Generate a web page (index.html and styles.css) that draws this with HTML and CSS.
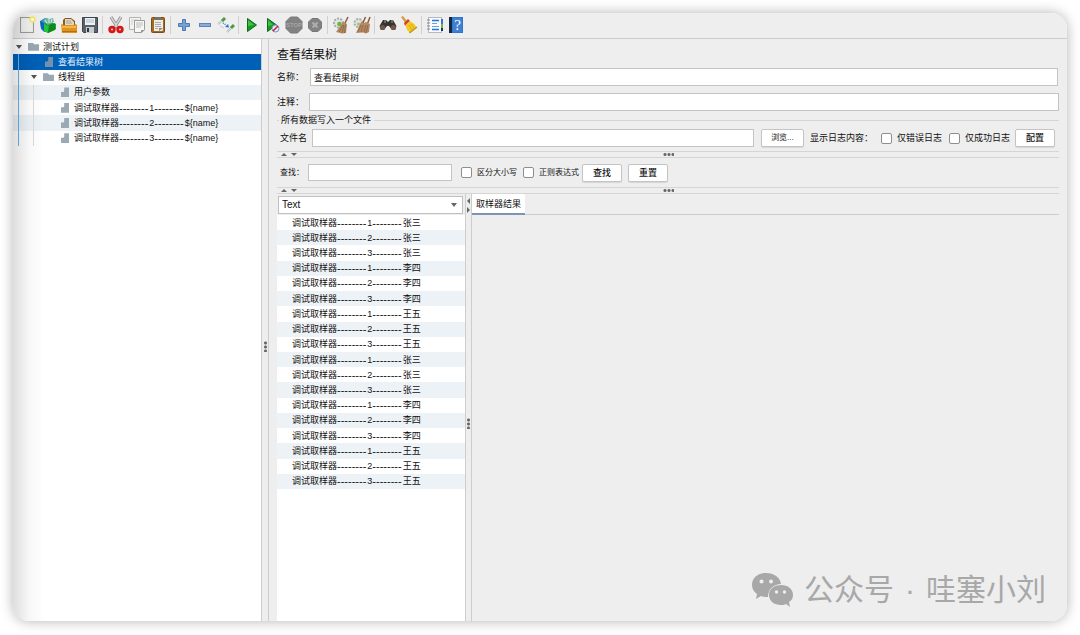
FILE: index.html
```html
<!DOCTYPE html>
<html lang="zh-CN">
<head>
	<meta charset="utf-8">
	<title>查看结果树</title>
	<meta name="viewport" content="initial-scale=1,width=device-width">
	<link rel="stylesheet" href="styles.css">
</head>
<body>

	<div class="window">
		<div class="toolbar">
			<button title="新建"><svg viewBox="0 0 18 18"><rect x="2.5" y="1.5" width="13" height="15" fill="#ececea" stroke="#9b9b97"/><path d="M4 3h10v12H4z" fill="#f1f1ef"/><circle cx="14.500" cy="3.500" r="3.200" fill="#f4e96a"/><circle cx="14.500" cy="3.500" r="1.600" fill="#fffde0"/></svg></button>
			<button title="模板"><svg viewBox="0 0 18 18"><path d="M1 5l5-3 4 1v12l-5 1-3-3z" fill="#2a8fb8"/><path d="M1 5l4 2v8l-3-3z" fill="#0d62c0"/><path d="M5 8l5-2 7 2-1 6-7 3-4-2z" fill="#15962b"/><path d="M5 8l5 2-1 7-4-2z" fill="#23c43d"/><path d="M10 10l6-3 1 6-8 4z" fill="#0c8a1d"/><path d="M4 5l3-3 3 1 4-1 1 4-6 3z" fill="#6fb6a4"/><path d="M6 4l2 3M10 3v4M13 3l-1 4" stroke="#d9efe9"/></svg></button>
			<button title="打开"><svg viewBox="0 0 18 18"><path d="M3 10V4l2-2h6l4 3v6z" fill="#8b5a14"/><path d="M5 3h6l3 3v5H5z" fill="#dcd9d0"/><path d="M6 5h5M6 7h6" stroke="#a9a494"/><path d="M1 8l3 1h9l3-1 1 1v8H2z" fill="#e0921f"/><path d="M2 10h14v2H2z" fill="#f4b54a"/><path d="M2 15h15v1H2z" fill="#b86d0b"/></svg></button>
			<button title="保存"><svg viewBox="0 0 18 18"><path d="M1.500 1.500h15v15h-14l-1-1z" fill="#59616b" stroke="#3d444c"/><rect x="4" y="2" width="10" height="7" fill="#eef2f5"/><path d="M5 4h8M5 6h8" stroke="#a9bccb"/><rect x="5" y="11" width="8" height="6" fill="#c9cdd1"/><rect x="6" y="12" width="2" height="4" fill="#30363d"/></svg></button>
			<span class="separator"></span>
			<button title="剪切"><svg viewBox="0 0 18 18"><path d="M4 1l7 11M14 1L7 12" stroke="#888" stroke-width="3.200"/><path d="M4 1l7 11M14 1L7 12" stroke="#d4d4d4" stroke-width="1.600"/><circle cx="5" cy="13.500" r="2.300" fill="none" stroke="#d81616" stroke-width="2.800"/><circle cx="13" cy="13.500" r="2.300" fill="none" stroke="#d81616" stroke-width="2.800"/></svg></button>
			<button title="复制"><svg viewBox="0 0 18 18"><path d="M1.500 1.500h11v12h-11z" fill="#f4f4f2" stroke="#b3b3af"/><path d="M3 4h7M3 6h2M3 8h2" stroke="#ccc"/><path d="M6.500 4.500h10v9l-3 3h-7z" fill="#f7f7f5" stroke="#9b9b97"/><path d="M8 7h7M8 9h7M8 11h5" stroke="#bbb"/><path d="M13 17v-3h4z" fill="#999"/></svg></button>
			<button title="粘贴"><svg viewBox="0 0 18 18"><rect x="2.500" y="1.500" width="13" height="15" rx="1" fill="#a66a1e" stroke="#784c16"/><path d="M5 4h9v10l-1 1H5z" fill="#ececea"/><path d="M6 1h6v3H6z" fill="#71716d"/><path d="M6 6.500h6M6 8.500h6M6 10.500h6M6 12.500h3" stroke="#aaa"/><path d="M10 15v-3h4z" fill="#888"/></svg></button>
			<span class="separator"></span>
			<button title="展开"><svg viewBox="0 0 18 18"><path d="M7.500 3.500h3v4h4v3h-4v4h-3v-4h-4v-3h4z" fill="#76a3d6" stroke="#4a7ab5"/></svg></button>
			<button title="折叠"><svg viewBox="0 0 18 18"><rect x="3.500" y="7.500" width="11" height="3" fill="#8aacd8" stroke="#5a84bd"/></svg></button>
			<button title="切换"><svg viewBox="0 0 18 18"><path d="M1 8l4-3M10 16l4-4" stroke="#a9b3ab" stroke-width="1.800"/><path d="M1 8l4-3M10 16l4-4" stroke="#fafafa" stroke-width=".7"/><path d="M5 5l3-3M14 12l3-3" stroke="#4a9b43" stroke-width="3"/><path d="M3 10l4 2" stroke="#ccc"/><path d="M6 7l3 2" stroke="#2671d8" stroke-width="1.300" stroke-dasharray="1 1"/><path d="M12 11.500l-4-.5 3-3z" fill="#2671d8"/></svg></button>
			<span class="separator"></span>
			<button title="启动"><svg viewBox="0 0 18 18"><path d="M4.500 2.500v13l9-6.500z" fill="#159a24" stroke="#0a6d14"/><path d="M5 4v6l6-1z" fill="#47bd4b"/></svg></button>
			<button title="不停顿开始"><svg viewBox="0 0 18 18"><path d="M3.500 2.500v13l9-6.500z" fill="#159a24" stroke="#0a6d14"/><path d="M4 4v6l5-1z" fill="#47bd4b"/><circle cx="11.500" cy="12.500" r="3.500" fill="#e6eef9" stroke="#6b94cd"/><path d="M9 15l5-5" stroke="#d5202a" stroke-width="1.600"/></svg></button>
			<button title="停止" disabled><svg viewBox="0 0 18 18"><path d="M5.500 1h7L17 5.500v7L12.500 17h-7L1 12.500v-7z" fill="#828282" stroke="#787878"/><text class="stop-text" x="9" y="11" text-anchor="middle">STOP</text></svg></button>
			<button title="关闭" disabled><svg viewBox="0 0 18 18"><path d="M6 2.500h6l3.500 3.500v6L12 15.500H6L2.500 12V6z" fill="#828282" stroke="#787878"/><path d="M6.500 6.500l5 5M11.500 6.500l-5 5" stroke="#adadad" stroke-width="2.200"/></svg></button>
			<span class="separator"></span>
			<button title="清除"><svg viewBox="0 0 18 18"><circle cx="6.500" cy="7" r="4.500" fill="#e2e4e1" stroke="#aaaca9" stroke-width="2" stroke-dasharray="2 1.200"/><circle cx="7.500" cy="8" r="2.300" fill="#63b83a"/><path d="M16 1l-4 8" stroke="#8c5c39" stroke-width="1.600"/><path d="M11 6l4 2-1 9-4 .5-6-1.500z" fill="#b58a63"/><path d="M11 9l-4 7M12 9l-2 8M13.500 9l-1 8" stroke="#8a6341" stroke-width=".8"/></svg></button>
			<button title="清除全部"><svg viewBox="0 0 18 18"><circle cx="5.500" cy="7" r="4" fill="#dfe2dd" stroke="#aaaca9" stroke-width="2" stroke-dasharray="2 1.200"/><circle cx="5.500" cy="8" r="1.500" fill="#9cc188"/><path d="M12.500 1L9 9M17 1l-3 8" stroke="#8c5c39" stroke-width="1.500"/><path d="M8 6l3 1 2-1 4 2-1 8-3 1.500-3-1-7 .5z" fill="#b58a63"/><path d="M8 9l-3 7M10 9l-2 7M13 9l-2 7M15 9l-2 8" stroke="#8a6341" stroke-width=".8"/></svg></button>
			<span class="separator"></span>
			<button title="搜索"><svg viewBox="0 0 18 18"><path d="M4 4h3l2 2 2-2h3l3.500 6-1.500 4h-3l-3-4H8l-3 4H2L.5 10z" fill="#37332f"/><path d="M5 4h2v3H5zM12 4h2v3h-2z" fill="#706a63"/><circle cx="3.500" cy="11.500" r="2.600" fill="#75564a"/><circle cx="14.500" cy="11.500" r="2.600" fill="#75564a"/></svg></button>
			<button title="重置搜索"><svg viewBox="0 0 18 18"><path d="M1 1l2-1 4 5-2 1.500z" fill="#d99a49"/><path d="M4 7l4-4 2 2-5 5z" fill="#d94222"/><path d="M5.500 9L10 5q4 2 6.500 6l-6.500 6-3-3z" fill="#f2c928"/><path d="M9 9l3 5M11 8l3 4" stroke="#d0a214" stroke-width=".8"/><path d="M9.500 17l7.500-6" stroke="#c4940f" stroke-width="1.500"/></svg></button>
			<span class="separator"></span>
			<button title="函数助手"><svg viewBox="0 0 18 18"><rect x="2.500" y="1.500" width="13" height="15" fill="#f8fafc" stroke="#b5bac0"/><path d="M1 4h3M1 7h3M1 10h3M1 13h3" stroke="#888"/><path d="M6 4.500h7M6 13.500h7" stroke="#2673dc" stroke-width="1.600"/><path d="M6 7.500h5M6 10.500h7" stroke="#68a0e8"/><path d="M16 3v5" stroke="#3174d5" stroke-width="2"/><path d="M16 8v4" stroke="#74b447" stroke-width="2"/><path d="M16 12v3" stroke="#12395f" stroke-width="2"/></svg></button>
			<button title="帮助"><svg viewBox="0 0 18 18"><rect x="2" y="1" width="14" height="16" fill="#2f74cf"/><path d="M2 1h3v16H2z" fill="#172940"/><path d="M6 2h9v14H6z" fill="#4080d2"/><text class="help-text" x="10.500" y="14" text-anchor="middle">?</text></svg></button>
		</div>

		<div class="content">
			<div class="sidebar">
				<div class="tree">
					<div class="tree-row"><span class="arrow"></span><span class="folder"></span>测试计划</div>
					<div class="tree-row level-1 selected"><span class="file"></span>查看结果树</div>
					<div class="tree-row level-1 parent"><span class="arrow"></span><span class="folder"></span>线程组</div>
					<div class="tree-row level-2"><span class="file"></span>用户参数</div>
					<div class="tree-row level-2"><span class="file"></span>调试取样器<span class="dash">--------</span>1<span class="dash">--------</span>${name}</div>
					<div class="tree-row level-2"><span class="file"></span>调试取样器<span class="dash">--------</span>2<span class="dash">--------</span>${name}</div>
					<div class="tree-row level-2"><span class="file"></span>调试取样器<span class="dash">--------</span>3<span class="dash">--------</span>${name}</div>
					<span class="guide guide-outer"></span>
					<span class="guide guide-inner"></span>
				</div>
			</div>
			<div class="divider"><span class="dots-v"></span></div>

			<div class="main">
				<h1>查看结果树</h1>
				<div class="form-row name-row">
					<label for="name">名称：</label>
					<input type="text" id="name" value="查看结果树">
				</div>
				<div class="form-row">
					<label for="comment">注释：</label>
					<input type="text" id="comment">
				</div>
				<fieldset>
					<legend>所有数据写入一个文件</legend>
					<div class="file-row">
						<label for="filename">文件名</label>
						<input type="text" id="filename">
						<button class="btn browse">浏览...</button>
						<span class="log-label">显示日志内容：</span>
						<label class="check"><input type="checkbox">仅错误日志</label>
						<label class="check"><input type="checkbox">仅成功日志</label>
						<button class="btn">配置</button>
					</div>
				</fieldset>

				<div class="splitter"><span class="up"></span><span class="down"></span><span class="dots-h"></span></div>
				<div class="search-row">
					<label for="search">查找：</label>
					<input type="text" id="search">
					<label class="check"><input type="checkbox">区分大小写</label>
					<label class="check"><input type="checkbox">正则表达式</label>
					<button class="btn">查找</button>
					<button class="btn">重置</button>
				</div>
				<div class="splitter"><span class="up"></span><span class="down"></span><span class="dots-h"></span></div>

				<div class="results">
					<div class="result-list">
						<div class="combo">
							<select aria-label="Renderer"><option>Text</option></select>
						</div>
						<ul>
							<li>调试取样器<span class="dash">--------</span>1<span class="dash">--------</span>张三</li>
							<li>调试取样器<span class="dash">--------</span>2<span class="dash">--------</span>张三</li>
							<li>调试取样器<span class="dash">--------</span>3<span class="dash">--------</span>张三</li>
							<li>调试取样器<span class="dash">--------</span>1<span class="dash">--------</span>李四</li>
							<li>调试取样器<span class="dash">--------</span>2<span class="dash">--------</span>李四</li>
							<li>调试取样器<span class="dash">--------</span>3<span class="dash">--------</span>李四</li>
							<li>调试取样器<span class="dash">--------</span>1<span class="dash">--------</span>王五</li>
							<li>调试取样器<span class="dash">--------</span>2<span class="dash">--------</span>王五</li>
							<li>调试取样器<span class="dash">--------</span>3<span class="dash">--------</span>王五</li>
							<li>调试取样器<span class="dash">--------</span>1<span class="dash">--------</span>张三</li>
							<li>调试取样器<span class="dash">--------</span>2<span class="dash">--------</span>张三</li>
							<li>调试取样器<span class="dash">--------</span>3<span class="dash">--------</span>张三</li>
							<li>调试取样器<span class="dash">--------</span>1<span class="dash">--------</span>李四</li>
							<li>调试取样器<span class="dash">--------</span>2<span class="dash">--------</span>李四</li>
							<li>调试取样器<span class="dash">--------</span>3<span class="dash">--------</span>李四</li>
							<li>调试取样器<span class="dash">--------</span>1<span class="dash">--------</span>王五</li>
							<li>调试取样器<span class="dash">--------</span>2<span class="dash">--------</span>王五</li>
							<li>调试取样器<span class="dash">--------</span>3<span class="dash">--------</span>王五</li>
						</ul>
					</div>
					<div class="divider small">
						<span class="left"></span><span class="right"></span>
						<span class="dots-v"></span>
					</div>
					<div class="detail">
						<div class="tabs"><button class="tab">取样器结果</button></div>
					</div>
				</div>
			</div>
		</div>

		<div class="watermark">
			<svg viewBox="0 0 42 36"><path d="M15 1C7 1 1 6 1 13c0 4 2 7 5 9l-1 5 5-3c2 1 5 1 7 1 0-8 6-13 13-13C29 5 23 1 15 1z" fill="#a8a8a8"/><circle cx="10.500" cy="9.500" r="2" fill="#eee"/><circle cx="20" cy="9.500" r="2" fill="#eee"/><path d="M30 13c-7 0-12 4-12 10s5 10 12 10c2 0 3 0 5-1l4 3-1-5c3-2 4-4 4-7 0-6-5-10-12-10z" fill="#a8a8a8"/><circle cx="25.500" cy="20" r="1.700" fill="#eee"/><circle cx="33.500" cy="20" r="1.700" fill="#eee"/></svg>
			<span>公众号</span><span>·</span><span>哇塞小刘</span>
		</div>
	</div>

</body>
</html>
```
FILE: styles.css
```css
*{
	box-sizing: border-box;
}

body{
	margin: 0;
	padding: 13px 13px 14px;
	background: white;
	font-family: "Liberation Sans", "Noto Sans CJK SC", sans-serif;
	font-size: 9px;
	line-height: 14px;
	color: #111;
}

button, input, select{
	font: inherit;
	color: inherit;
}

.window{
	position: relative;
	display: flex;
	flex-direction: column;
	min-height: calc(100vh - 27px);
	border-radius: 16px;
	overflow: hidden;
	background: #eee;
}

/* the shadow belongs to the body so that the window can clip its corners */
body::before{
	content: "";
	position: absolute;
	top: 13px;
	right: 13px;
	bottom: 14px;
	left: 13px;
	border-radius: 16px;
	box-shadow: 0 0 13px rgba(0,0,0,0.3);
}

/* toolbar */
.toolbar{
	display: flex;
	align-items: center;
	height: 26px;
	padding: 0 0 1px 3px;
	border-bottom: 1px solid #cdcdcd;
}

.toolbar button{
	display: flex;
	justify-content: center;
	width: 21px;
	padding: 0;
	border: 0;
	background: none;
}

.toolbar svg{
	width: 18px;
	height: 18px;
}

.separator{
	width: 1px;
	height: 18px;
	margin: 0 2px;
	background: #d0d0d0;
}

.stop-text{
	font-size: 6px;
	font-weight: bold;
	fill: #a5a5a5;
}

.help-text{
	font-family: "Liberation Serif", serif;
	font-size: 15px;
	fill: white;
}

.content{
	flex: 1;
	display: flex;
}

/* tree */
.sidebar{
	width: 248px;
	background: white;
}

.sidebar::after{
	content: "";
	position: absolute;
	top: 0;
	bottom: 0;
	left: 0;
	width: 32px;
	background: linear-gradient(to right, rgba(0,0,0,0.13), rgba(0,0,0,0.03) 50%, transparent);
	pointer-events: none;
}

.tree{
	position: relative;
	display: grid;
	grid-template-rows: repeat(7, 1fr);
	height: 107px;
}

.tree-row{
	display: flex;
	align-items: center;
	padding-left: 3px;
	white-space: pre;
}

.tree-row:nth-child(even){
	background: #edf2f6;
}

.level-1{
	padding-left: 32px;
}

.level-1.parent{
	padding-left: 18px;
}

.level-2{
	padding-left: 48px;
}

.tree-row.selected{
	background: #0060b8;
	color: #e4f0fb;
}

.dash{
	margin-right: 1px;
	font-size: 11px;
}

.arrow{
	margin-right: 6px;
	border: 3px solid transparent;
	border-top: 4px solid #555;
	border-bottom: 0;
}

.folder{
	width: 11px;
	height: 8px;
	margin-right: 4px;
	background: #9aa9b2;
	clip-path: polygon(0 0, 45% 0, 55% 20%, 100% 20%, 100% 100%, 0 100%);
}

.file{
	width: 8px;
	height: 10px;
	margin-right: 5px;
	background: #9aa9b2;
	clip-path: polygon(40% 0, 100% 0, 100% 100%, 0 100%, 0 45%, 30% 45%, 40% 35%);
}

.selected .file{
	background: #7590aa;
}

.guide{
	position: absolute;
	width: 1px;
	bottom: 0;
}

.guide-outer{
	left: 5px;
	top: 15px;
	background: #66b5ee;
}

.guide-inner{
	left: 20px;
	top: 46px;
	background: #dcdcdc;
}

.divider{
	display: flex;
	flex-direction: column;
	align-items: center;
	justify-content: center;
	width: 8px;
	padding-top: 32px;
	border: 1px solid #cdcdcd;
	border-width: 0 1px;
}

.dots-v, .dots-h{
	width: 3px;
	height: 11px;
	background: radial-gradient(circle, #666 1px, transparent 2px) 0 0 / 3px 4px;
}

.dots-h{
	width: 11px;
	height: 3px;
	background-size: 4px 3px;
}

/* main panel */
.main{
	flex: 1;
	display: flex;
	flex-direction: column;
	min-width: 0;
	padding: 7px 8px 0;
}

h1{
	margin: 0;
	font-size: 12px;
	font-weight: normal;
	line-height: 18px;
}

input[type="text"]{
	flex: 1;
	min-width: 0;
	height: 18px;
	padding: 0 3px;
	border: 1px solid #c4c4c4;
	border-radius: 0;
	background: white;
}

.form-row{
	display: flex;
	align-items: center;
	margin-top: 7px;
}

.form-row label{
	width: 32px;
}

.name-row{
	margin-top: 4px;
	padding-right: 1px;
}

.name-row label{
	width: 33px;
}

fieldset{
	margin: 2px 0 0;
	padding: 0;
	border: 0;
	border-top: 1px solid #d5d5d5;
}

legend{
	margin-left: 2px;
	padding: 0 3px 0 2px;
}

.file-row, .search-row{
	display: flex;
	align-items: center;
}

.file-row{
	padding: 2px 4px 0 3px;
}

.file-row label[for]{
	width: 32px;
}

.btn{
	width: 40px;
	height: 18px;
	padding: 0;
	border: 1px solid #c4c4c4;
	border-radius: 2px;
	background: white;
	font-weight: 500;
	box-shadow: 0 1px 1px rgba(0,0,0,0.1);
}

.browse{
	width: 43px;
	margin: 0 6px 0 7px;
	font-size: 8px;
	font-weight: normal;
}

.log-label{
	width: 71px;
}

.check{
	display: flex;
	align-items: center;
	margin-right: 5px;
}

.file-row .check + .check{
	margin-left: 2px;
}

input[type="checkbox"]{
	appearance: none;
	width: 11px;
	height: 11px;
	margin: 0 5px 0 0;
	border: 1px solid #8e8e8e;
	border-radius: 2px;
	background: white;
}

input[type="checkbox"]:checked{
	background: #0060b8;
}

.splitter{
	position: relative;
	display: flex;
	align-items: center;
	height: 7px;
	padding-left: 4px;
	border: 1px solid #d5d5d5;
	border-width: 1px 0;
}

fieldset + .splitter{
	margin-top: 4px;
}

.splitter .dots-h{
	position: absolute;
	left: calc(50% - 5px);
}

.up, .down, .left, .right{
	border: 2px solid transparent;
}

.up{
	margin-right: 4px;
	border-width: 0 3px 3px;
	border-bottom-color: #666;
}

.down{
	border-width: 3px 3px 0;
	border-top-color: #666;
}

.search-row{
	height: 29px;
	padding-left: 3px;
	font-size: 8px;
}

.search-row label[for]{
	width: 28px;
}

.search-row input[type="text"]{
	flex: none;
	width: 144px;
	height: 17px;
	margin-right: 9px;
}

.search-row .check{
	margin-right: 6px;
}

.search-row .check + .btn{
	margin-left: -3px;
}

.search-row .btn{
	margin-right: 6px;
	font-size: 9px;
}

/* results */
.results{
	flex: 1;
	display: flex;
}

.result-list{
	display: flex;
	flex-direction: column;
	width: 188px;
}

.combo{
	position: relative;
	padding: 2px 2px 1px 1px;
}

.combo select{
	display: block;
	width: 100%;
	height: 18px;
	padding: 0 3px;
	border: 1px solid #c0c0c0;
	border-radius: 0;
	background: white;
	font-size: 10px;
	appearance: none;
}

.combo::after{
	content: "";
	position: absolute;
	top: 9px;
	right: 8px;
	border: 3px solid transparent;
	border-top: 4px solid #666;
	border-bottom: 0;
}

ul{
	flex: 1;
	display: grid;
	grid-template-rows: repeat(18, 1fr);
	margin: 0;
	padding: 0 0 132px;
	background: white;
	list-style: none;
}

li{
	display: flex;
	align-items: center;
	padding-left: 15px;
	white-space: pre;
}

li:nth-child(even){
	background: #edf2f6;
}

.divider.small{
	position: relative;
	width: 7px;
}

.left, .right{
	position: absolute;
	top: 4px;
	left: 1px;
	border-width: 3px 3px 3px 0;
	border-right-color: #666;
}

.right{
	top: 13px;
	border-width: 3px 0 3px 3px;
	border-left-color: #666;
}

.detail{
	flex: 1;
}

.tabs{
	display: flex;
	border-bottom: 1px solid #cdcdcd;
}

.tab{
	height: 21px;
	margin-bottom: -1px;
	padding: 1px 4px 0;
	border: 0;
	border-bottom: 2px solid #7f93b8;
	background: white;
}

/* watermark */
.watermark{
	position: absolute;
	right: 21px;
	bottom: 13px;
	display: flex;
	align-items: center;
	gap: 11px;
	font-size: 30px;
	line-height: 36px;
	color: #a8a8a8;
}

.watermark svg{
	width: 42px;
	height: 36px;
}
```
